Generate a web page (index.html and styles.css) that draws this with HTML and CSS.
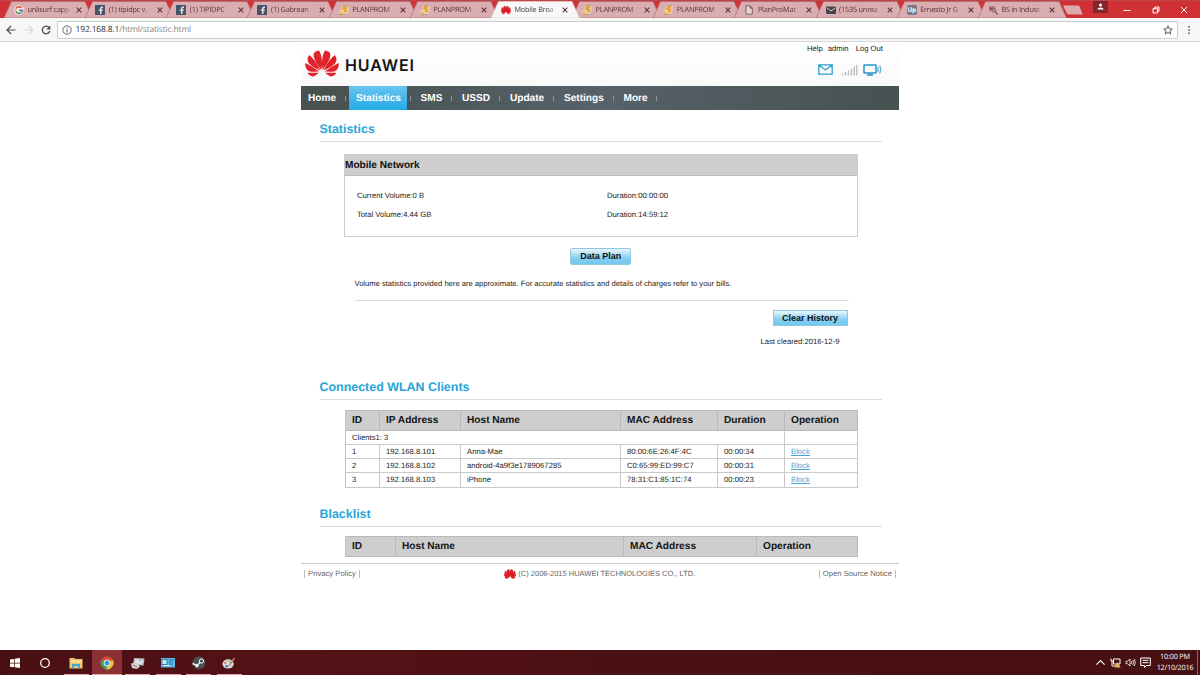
FILE: index.html
```
<!DOCTYPE html>
<html lang="en">
<head>
<meta charset="utf-8">
<title>Mobile Broadband</title>
<link rel="stylesheet" href="styles.css">
</head>
<body>
<svg class="defs" aria-hidden="true">
  <symbol id="tab" viewBox="0 0 90 18"><path d="M1 18 L8.500 1.500 H82 L89.500 18 Z"/></symbol>
  <symbol id="x" viewBox="0 0 6 6"><path d="M.7.700l4.600 4.600M5.300.700L.7 5.300" stroke="#5b3438" stroke-width="1.100"/></symbol>
  <symbol id="fb" viewBox="0 0 10 10"><rect width="10" height="10" rx=".5" fill="#46546b"/><path d="M5 9V5.700H3.700V4.400H5V3.300Q5 1.200 8 1.600V3q-1.500-.2-1.500.6v.8H8L7.700 5.700H6.500V9z" fill="#eadfe2"/></symbol>
  <symbol id="pp" viewBox="0 0 10 10"><path d="M3.500 .5h6v5.500L7.500 9.500H.5V6.500L2.500 4z" fill="#eed5b0"/><path d="M4 1.200h4.500L7 4h1.500L7.500 7.500H4.500L5.500 5H3z" fill="#e9a62e"/><path d="M1 6.500h2.500V9H1z" fill="#f0b94a"/><path d="M.5 9.500h7M4 .7h5" stroke="#a78379" stroke-width=".7"/></symbol>
  <symbol id="hw" viewBox="0 0 34 27"><g id="half"><path d="M16.300 20C18 12 16.500 4 14 .5 11 .8 9 2 8.600 4.500 8.500 9 12 14 16.300 20M15.300 20.500C12 13 8 8 4.300 5 2 8 2 11 4 13.500 6.500 16.500 11 18.800 15.300 20.500M14.500 21.600C9 18 4 14.500.3 13-.2 16.500 1 19.500 4 21.200 7 22 11 21.800 14.500 21.600M14 22.800H2.500C4 25.500 7 27 9 26.200 11 25.200 12.500 24 14 22.800"/></g><use href="#half" transform="matrix(-1 0 0 1 34 0)"/></symbol>
</svg>

<header class="browser">
  <div class="tabs">
    <div class="tab"><svg class="shape"><use href="#tab"/></svg><svg class="fav" viewBox="0 0 10 10"><circle cx="5" cy="5" r="4.800" fill="#f5eeee"/><g fill="none" stroke-width="1.500"><path d="M7.500 2.700A3.400 3.400 0 0 0 2 3.500" stroke="#d9483b"/><path d="M2 3.500a3.400 3.400 0 0 0 0 3" stroke="#e0b03d"/><path d="M2 6.500a3.400 3.400 0 0 0 5.300 1" stroke="#49915a"/><path d="M7.300 7.500Q8.300 6.500 8.300 5.200H5" stroke="#5a78b8"/></g></svg><span class="name">unlisurf capp</span><svg class="x"><use href="#x"/></svg></div>
    <div class="tab"><svg class="shape"><use href="#tab"/></svg><svg class="fav"><use href="#fb"/></svg><span class="name">(1) tipidpc v.</span><svg class="x"><use href="#x"/></svg></div>
    <div class="tab"><svg class="shape"><use href="#tab"/></svg><svg class="fav"><use href="#fb"/></svg><span class="name">(1) TIPIDPC</span><svg class="x"><use href="#x"/></svg></div>
    <div class="tab"><svg class="shape"><use href="#tab"/></svg><svg class="fav"><use href="#fb"/></svg><span class="name">(1) Gabrean</span><svg class="x"><use href="#x"/></svg></div>
    <div class="tab"><svg class="shape"><use href="#tab"/></svg><svg class="fav"><use href="#pp"/></svg><span class="name">PLANPROM</span><svg class="x"><use href="#x"/></svg></div>
    <div class="tab"><svg class="shape"><use href="#tab"/></svg><svg class="fav"><use href="#pp"/></svg><span class="name">PLANPROM</span><svg class="x"><use href="#x"/></svg></div>
    <div class="tab active"><svg class="shape"><use href="#tab"/></svg><svg class="fav red"><use href="#hw"/></svg><span class="name">Mobile Broa</span><svg class="x"><use href="#x"/></svg></div>
    <div class="tab"><svg class="shape"><use href="#tab"/></svg><svg class="fav"><use href="#pp"/></svg><span class="name">PLANPROM</span><svg class="x"><use href="#x"/></svg></div>
    <div class="tab"><svg class="shape"><use href="#tab"/></svg><svg class="fav"><use href="#pp"/></svg><span class="name">PLANPROM</span><svg class="x"><use href="#x"/></svg></div>
    <div class="tab"><svg class="shape"><use href="#tab"/></svg><svg class="fav" viewBox="0 0 10 10"><path d="M2 .8h4l2.300 2.300v6.100H2zM6 .8v2.400h2.300" fill="#ead3d5" stroke="#694b4d" stroke-width=".8"/></svg><span class="name">PlanProMat</span><svg class="x"><use href="#x"/></svg></div>
    <div class="tab"><svg class="shape"><use href="#tab"/></svg><svg class="fav" viewBox="0 0 10 10"><rect y="1.500" width="10" height="7.500" rx="1" fill="#47444e"/><path d="M1 3l4 3 4-3" fill="none" stroke="#dfc9cd"/></svg><span class="name">(1535 unrea</span><svg class="x"><use href="#x"/></svg></div>
    <div class="tab"><svg class="shape"><use href="#tab"/></svg><span class="fav up">Up</span><span class="name">Ernesto Jr G</span><svg class="x"><use href="#x"/></svg></div>
    <div class="tab"><svg class="shape"><use href="#tab"/></svg><svg class="fav" viewBox="0 0 10 10"><path d="M1 1h6v5H1z" fill="#c67b87"/><path d="M2 2v3M4 2v3M1 3.500h5" stroke="#a33a4d" stroke-width=".7"/><circle cx="5.500" cy="5" r="2" fill="none" stroke="#806274"/><path d="M7 6.500L9.700 9.500" stroke="#655465" stroke-width="1.200"/></svg><span class="name">BS in Indust</span><svg class="x"><use href="#x"/></svg></div>
    <svg class="newtab" viewBox="0 0 20 10"><path d="M1 .5h14q1 0 1.500 1L19.500 9q0 .5-1 .5H5.500q-1 0-1.500-1L.5 1.500Q.4.500 1 .5z" fill="#dcaaad"/></svg>
    <div class="window-buttons">
      <svg class="user" viewBox="0 0 15 12"><rect width="15" height="12" fill="#83262b"/><circle cx="7.500" cy="4" r="1.600" fill="#fff"/><path d="M4.500 8.500q0-2 3-2t3 2z" fill="#fff"/></svg>
      <svg viewBox="0 0 8 8"><path d="M.5 4.500h7" stroke="#fff"/></svg>
      <svg viewBox="0 0 8 8"><path d="M1 2.700h4.500V7H1zM2.700 2.500V1H7v4.300H5.700" fill="none" stroke="#fff"/></svg>
      <svg viewBox="0 0 8 8"><path d="M1 1l6 6M7 1L1 7" stroke="#fff"/></svg>
    </div>
  </div>
  <div class="toolbar">
    <svg class="tool" viewBox="0 0 10 10"><path d="M9.500 5H1M5 1L1 5l4 4" fill="none" stroke="#4d4d4d" stroke-width="1.200"/></svg>
    <svg class="tool" viewBox="0 0 10 10"><path d="M.5 5H9M5 1l4 4-4 4" fill="none" stroke="#d9d9d9" stroke-width="1.200"/></svg>
    <svg class="tool" viewBox="0 0 10 10"><path d="M8 2.500A3.800 3.800 0 1 0 8.800 6" fill="none" stroke="#4d4d4d" stroke-width="1.300"/><path d="M9.300.5v4H5.300z" fill="#4d4d4d"/></svg>
    <div class="address">
      <svg class="info" viewBox="0 0 10 10"><circle cx="5" cy="5" r="4.200" fill="none" stroke="#555" stroke-width=".9"/><path d="M5 4.500v3M5 2.500v1" stroke="#555"/></svg>
      <span class="url">192.168.8.1<i>/html/statistic.html</i></span>
      <svg class="star" viewBox="0 0 10 10"><path d="M5 .8l1.200 3 3.200.2L7 6l.8 3.100L5 7.400 2.200 9.100 3 6 .6 4l3.200-.2z" fill="none" stroke="#4b4b4b" stroke-width=".9"/></svg>
    </div>
    <svg class="dots" viewBox="0 0 4 10"><path d="M1.200 1h1.600v1.600H1.200zM1.200 4.200h1.600v1.600H1.200zM1.200 7.400h1.600V9H1.200z" fill="#555"/></svg>
  </div>
</header>

<main class="page">
  <div class="masthead">
    <svg class="logo"><use href="#hw"/></svg>
    <span class="brand">HUAWEI</span>
    <div class="account">
      <div class="links"><span>Help</span><span>admin</span><span>Log Out</span></div>
      <div class="status">
        <svg width="15" height="11" viewBox="0 0 15 11"><path d="M.8.800h13.400v9.400H.8zM1 1l6.500 5L14 1" fill="none" stroke="#2d9fce" stroke-width="1.300"/></svg>
        <svg width="17" height="12" viewBox="0 0 17 12"><path d="M1.500 11.500v-2M4.500 11.500V8M7.500 11.500v-5M10.500 11.500V5M13.300 11.500V2.500M15.800 11.500V1" stroke="#bdbdbd" stroke-width="1.400"/></svg>
        <svg width="19" height="12" viewBox="0 0 19 12"><rect x="1" y="1" width="12" height="8" rx=".5" fill="none" stroke="#2795cb" stroke-width="1.500"/><path d="M4 11h6M7 9v2" stroke="#2795cb" stroke-width="1.300"/><path d="M14.500 3q1.500 2.500 0 5M16.500 1.500q2.500 4 0 8" fill="none" stroke="#69b5dc" stroke-width="1.400"/></svg>
      </div>
    </div>
  </div>
  <nav class="nav">
    <a class="n1">Home</a><a class="n2 current">Statistics</a><a class="n3">SMS</a><a class="n4">USSD</a><a class="n5">Update</a><a class="n6">Settings</a><a class="n7">More</a>
  </nav>

  <section class="content">
    <h2 class="first">Statistics</h2>
    <div class="panel">
      <h3>Mobile Network</h3>
      <div class="usage">
        <span>Current Volume:0 B</span><span>Duration:00:00:00</span>
        <span>Total Volume:4.44 GB</span><span>Duration:14:59:12</span>
      </div>
    </div>
    <div class="center"><button class="btn plan">Data Plan</button></div>
    <p class="note">Volume statistics provided here are approximate. For accurate statistics and details of charges refer to your bills.</p>
    <div class="history">
      <button class="btn clear">Clear History</button>
      <p class="cleared">Last cleared:2016-12-9</p>
    </div>

    <h2 class="wlan">Connected WLAN Clients</h2>
    <div class="grid clients">
      <b>ID</b><b>IP Address</b><b>Host Name</b><b>MAC Address</b><b>Duration</b><b>Operation</b>
      <span class="span5">Clients1: 3</span><span></span>
      <span>1</span><span>192.168.8.101</span><span>Anna-Mae</span><span>80:00:6E:26:4F:4C</span><span>00:00:34</span><span><a>Block</a></span>
      <span>2</span><span>192.168.8.102</span><span>android-4a9f3e1789067285</span><span>C0:65:99:ED:99:C7</span><span>00:00:31</span><span><a>Block</a></span>
      <span>3</span><span>192.168.8.103</span><span>iPhone</span><span>78:31:C1:85:1C:74</span><span>00:00:23</span><span><a>Block</a></span>
    </div>

    <h2 class="black">Blacklist</h2>
    <div class="grid blocked"><b>ID</b><b>Host Name</b><b>MAC Address</b><b>Operation</b></div>
  </section>

  <footer class="footer">
    <span class="piped">Privacy Policy</span>
    <span class="copy"><svg><use href="#hw"/></svg>(C) 2006-2015 HUAWEI TECHNOLOGIES CO., LTD.</span>
    <span class="piped">Open Source Notice</span>
  </footer>
</main>

<div class="taskbar">
  <div class="app"><svg viewBox="0 0 12 12"><path d="M1 2.500l4-.6v3.800H1zM5.700 1.800L11 1v4.700H5.700zM1 6.400h4v3.900l-4-.6zM5.700 6.400H11v4.700l-5.300-.8z" fill="#fff"/></svg></div>
  <div class="app"><svg viewBox="0 0 12 12"><circle cx="6" cy="6" r="4.300" fill="none" stroke="#fff" stroke-width="1.300"/></svg></div>
  <div class="app open"><svg viewBox="0 0 14 12"><path d="M.5 1h5l1 1h7v9.500H.5z" fill="#eac46f"/><path d="M1 3.500h12v2H1z" fill="#f8e3a4"/><path d="M3 11.500V7h8v4.500H9V9H5v2.500z" fill="#42a6da"/></svg></div>
  <div class="app open hot"><svg viewBox="0 0 14 14"><circle cx="7" cy="7" r="6.500" fill="#4b9a55"/><path d="M7 7L1.400 3.700A6.500 6.500 0 0 1 12.800 4z" fill="#d94a3d"/><path d="M7 7l5.800-3A6.500 6.500 0 0 1 6.500 13.500z" fill="#edc23e"/><circle cx="7" cy="7" r="3.300" fill="#fff"/><circle cx="7" cy="7" r="2.500" fill="#2d9be0"/></svg></div>
  <div class="app open"><svg viewBox="0 0 14 12"><path d="M3 1l10.500.5-1 7L2 8z" fill="#b8c4cb"/><path d="M4.500 2.500l7 .3-.6 4-7-.3z" fill="#e5e8ec"/><path d="M0 6.500l5-1 4 4-3 2.500-5-1z" fill="#ddd1cf"/><path d="M2 8l4 2M8 4l2-1" stroke="#76808b"/></svg></div>
  <div class="app open"><svg viewBox="0 0 14 12"><rect y="1" width="14" height="9.500" fill="#58b9e4"/><path d="M1 2.500h5v5H1zM8 3h5M8 5h3M8 7h4" fill="#c5eafa" stroke="#195e8b" stroke-width=".7"/><path d="M2.500 8.500h6" stroke="#fff"/></svg></div>
  <div class="app open"><svg viewBox="0 0 14 14"><circle cx="7" cy="7" r="6.500" fill="#4b4d55"/><path d="M.5 7.500L5 9.500 9 5.500" fill="none" stroke="#e6e7e9" stroke-width="1.700"/><circle cx="9.500" cy="5" r="2.100" fill="#4b4d55" stroke="#fff"/><circle cx="5" cy="9.700" r="1.500" fill="#fff"/></svg></div>
  <div class="app open"><svg viewBox="0 0 15 14"><ellipse cx="6.500" cy="8" rx="6" ry="5" fill="#d4dce5"/><circle cx="3.500" cy="7" r="1.100" fill="#d65e47"/><circle cx="6" cy="5" r="1.100" fill="#e1b945"/><circle cx="9" cy="6.500" r="1.100" fill="#4b9c67"/><circle cx="5" cy="10.500" r="1.300" fill="#3478b6"/><path d="M7.500 10.500L13.300 1.500" stroke="#d58a60" stroke-width="1.500"/></svg></div>
  <div class="tray">
    <svg viewBox="0 0 10 10"><path d="M1.300 7L5 3.300 8.700 7" fill="none" stroke="#fff"/></svg>
    <svg viewBox="0 0 11 10"><path d="M3.500 1.500H10v5H3.500V1.500M1 1v2.500h2M2 3.500v5h4" fill="none" stroke="#fff"/><path d="M7.500 4.500L10.700 10H4.500z" fill="#e9b156"/></svg>
    <svg viewBox="0 0 11 10"><path d="M1 3.800h1.500L5 1.500v7L2.500 6.200H1zM6.300 3.500q1 1.500 0 3M7.800 2.500q1.700 2.500 0 5M9.300 1.500q2 3.500 0 7" fill="none" stroke="#fff" stroke-width=".8"/></svg>
    <svg viewBox="0 0 11 11"><path d="M.7 1h9.600v7.500H6.500L4.500 10.500v-2H.7zM2.500 3.300h6M2.500 5.700h6" fill="none" stroke="#fff"/></svg>
    <div class="clock"><span>10:00 PM</span><span>12/10/2016</span></div>
  </div>
</div>
</body>
</html>
```
FILE: styles.css
```
* { box-sizing: border-box; }
body {
  margin: 0; width: 1200px; height: 675px; overflow: hidden; background: #fff;
  display: flex; flex-direction: column;
  font-family: "Liberation Sans", Arial, sans-serif; font-size: 7.7px; color: #222;
  text-rendering: geometricPrecision;
}
h2, h3, p { margin: 0; }
svg { display: block; flex: none; }
.defs { position: absolute; width: 0; height: 0; }

/* Browser frame */
.browser { height: 42px; flex: none; background: #f7f7f7; border-bottom: 1.500px solid #d5d7d6; }
.tabs { display: flex; height: 18px; padding-left: 3px; background: #d13135; border-top: 1px solid #b9474a; }
.tab {
  position: relative; flex: none; width: 90px; height: 17px; margin-right: -8.850px; padding-left: 11px;
  display: flex; align-items: center; font: 7.300px "Open Sans", "Noto Sans", sans-serif; letter-spacing: -.2px; color: #5c3034;
}
.shape { position: absolute; left: 0; top: -1px; width: 90px; height: 18px; fill: #daadb1; stroke: #b06c72; stroke-width: .7; }
.active { z-index: 1; color: #454545; }
.active .shape { fill: #f7f7f7; stroke: #e3cdcd; }
.fav { position: relative; width: 10px; height: 10px; }
.red { fill: #dd1820; stroke: #dd1820; stroke-width: 1.500; }
.up { font-size: 6.500px; line-height: 10px; font-weight: 700; text-align: center; color: #fff; background: #75767f; border-radius: 2px; }
.name {
  position: relative; width: 44px; margin-left: 3.500px; white-space: nowrap;
  -webkit-mask-image: linear-gradient(90deg, #000 75%, rgba(0,0,0,.2) 96%); mask-image: linear-gradient(90deg, #000 75%, rgba(0,0,0,.2) 96%);
}
.x { position: relative; width: 6px; height: 6px; margin-left: 4px; }
.newtab { width: 20px; height: 10px; margin: 4px 0 0 5px; }
.window-buttons { display: flex; align-items: center; gap: 20.500px; margin-left: auto; padding-right: 12px; }
.window-buttons svg { width: 8px; height: 8px; }
.window-buttons .user { width: 15px; height: 12px; margin: 0 -5px 5px 0; }
.toolbar { display: flex; align-items: center; height: 23px; padding: 0 9px 0 6px; gap: 7.500px; }
.tool { width: 10px; height: 10px; }
.address { flex: 1; height: 18px; margin: 1px 0 0 -2px; padding: 0 4px; display: flex; align-items: center; background: #fff; border: 1px solid #c8ceca; border-radius: 1px; }
.info { width: 10px; height: 10px; }
.url { flex: 1; margin: -1px 0 0 4px; font: 8.500px "Open Sans", "Noto Sans", sans-serif; letter-spacing: -.17px; color: #333; }
.url i { font-style: normal; color: #858585; }
.star { width: 10px; height: 10px; }
.dots { width: 4px; height: 10px; margin-left: 2px; }

/* Device console */
.page { flex: 1; width: 598px; margin: 0 auto; }
.masthead { height: 44px; display: flex; padding: 8px 16px 0 4px; background: linear-gradient(#fff, #f9f9f9); }
.logo { width: 34px; height: 27px; fill: #e0232a; }
.brand { width: 76px; margin: 5px 0 0 6px; font: 600 16px/20px Inter, sans-serif; letter-spacing: .9px; color: #151515; }
.account { margin-left: auto; }
.links { display: flex; gap: 5px; margin-top: -7px; line-height: 12px; }
.links span:last-child { margin-left: 2px; }
.status { display: flex; gap: 8px; margin: 9px 0 0 11px; }
.status svg:last-child { margin-left: -3px; }
.nav { display: flex; height: 24px; background: linear-gradient(90deg, #47514f, #56616a 50%, #465250); color: #fff; font: bold 10.100px/25px "Liberation Sans", Arial, sans-serif; }
.nav a { position: relative; padding-left: 7px; }
.nav a:not(.current)::after { content: ""; position: absolute; right: 3px; top: 10px; height: 5px; border-right: 1px solid #8b9497; }
.nav .n3::before { content: ""; position: absolute; left: 3px; top: 10px; height: 5px; border-right: 1px solid #8b9497; }
.nav .current { background: linear-gradient(#69c5f0, #25a9e5); }
.n1 { width: 48px; } .n2 { width: 58px; } .n3 { width: 48px; } .n4 { width: 48px; } .n5 { width: 54px; } .n6 { width: 59.500px; } .n7 { width: 43px; }
.nav .n3 { padding-left: 13.500px; }

.content { padding: 0 17px 0 18.500px; }
h2 { font-size: 12.450px; line-height: 16px; color: #27a5d8; border-bottom: 1px solid #dedede; }
.first { margin-top: 11px; height: 21px; }
.panel { width: 514px; height: 83px; margin: 12px 0 0 24.500px; border: 1px solid #ccc; }
.panel h3 { height: 21px; background: #cecece; border-bottom: 1px solid #bbb; font-size: 10.100px; line-height: 21px; color: #111; }
.usage { display: grid; grid-template-columns: 250px 1fr; grid-auto-rows: 19px; padding: 9.500px 0 0 12px; line-height: 19px; }
.center { display: flex; justify-content: center; margin-top: 11px; }
.btn { border: 1px solid #8fc8e3; padding: 0; background: linear-gradient(#edf6fb, #84cff1 60%, #74c8f0); color: #111; font: bold 9px/15px "Liberation Sans", Arial, sans-serif; }
.plan { width: 61px; height: 17px; border-radius: 2px; }
.note { width: 494px; height: 36px; margin: 0 0 0 35px; padding-top: 12.500px; border-bottom: 1px solid #dedede; font-size: 7.600px; line-height: 11px; white-space: nowrap; }
.history { display: flex; flex-direction: column; align-items: flex-end; height: 78px; padding: 9px 34.500px 0 0; }
.clear { width: 75px; height: 16px; }
.cleared { margin: 10px 8px 0 0; line-height: 12px; }
.wlan { height: 21px; }
.grid { display: grid; width: 513px; margin: 9.500px 0 0 25.500px; border-left: 1px solid #c4c4c4; }
.grid b, .grid span { border-right: 1px solid #c9c9c9; border-bottom: 1px solid #c9c9c9; padding-left: 6px; white-space: nowrap; }
.grid b { background: #cecece; border-color: #b9b9b9; border-top: 1px solid #b9b9b9; font-size: 10.150px; line-height: 19px; color: #151515; }
.clients { grid-template-columns: 34px 81px 160px 97px 67px 73px; grid-template-rows: 21px repeat(4, 14.300px); line-height: 13px; }
.span5 { grid-column: span 5; }
.grid a { color: #3ea7d8; text-decoration: underline; }
.black { margin-top: 18px; height: 21px; }
.blocked { grid-template-columns: 50px 228px 133px 101px; grid-template-rows: 21px; }
.footer { display: flex; justify-content: space-between; align-items: center; margin-top: 6px; padding: 0 3px; height: 20px; border-top: 1px solid #c9c9c9; color: #666; }
.piped { border: solid #bbb; border-width: 0 1px; padding: 0 3px; line-height: 8px; }
.copy { display: flex; align-items: center; gap: 2px; margin-left: 21px; font-size: 7.500px; }
.copy svg { width: 12px; height: 10px; fill: #dd1820; stroke: #dd1820; stroke-width: 1.500; }

/* Taskbar */
.taskbar { display: flex; height: 25px; flex: none; background: linear-gradient(90deg, #491013, #541216 25%, #4a1013 55%, #481012); color: #fff; }
.app { width: 30.600px; display: flex; align-items: center; justify-content: center; }
.app svg { width: 14px; height: 14px; }
.app:nth-child(-n+2) svg { width: 12px; height: 12px; margin-right: 1px; }
.open { background: linear-gradient(#e7a2a6, #e7a2a6) center bottom / 25px 1.500px no-repeat; }
.hot { background: linear-gradient(#e7a2a6, #e7a2a6) center bottom / 100% 1.500px no-repeat, #8b3034; }
.tray { display: flex; align-items: center; gap: 4px; margin-left: auto; padding-right: 2px; border-right: 1px solid #8e6164; margin-right: 2px; }
.tray svg { width: 11px; height: 11px; }
.clock { width: 40px; display: flex; flex-direction: column; align-items: center; font: 7.300px/10.500px "Open Sans", "Noto Sans", sans-serif; letter-spacing: -.2px; }
```
